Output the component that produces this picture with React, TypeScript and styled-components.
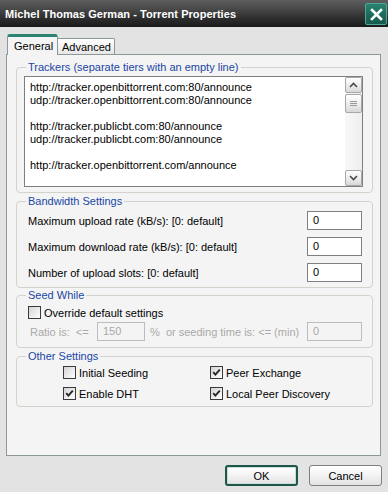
import React from "react";
import styled, { createGlobalStyle, css } from "styled-components";

const Global = createGlobalStyle`
  html, body { margin: 0; padding: 0; background: #e3e3e3; }
  body {
    font-family: "Liberation Sans", Arial, sans-serif;
    font-size: 11px;
    color: #000;
  }
  * { box-sizing: border-box; }
`;

const Window = styled.div`
  width: 388px;
  height: 492px;
  display: flex;
  flex-direction: column;
  background: #e3e3e3;
  overflow: hidden;
`;

const TitleBar = styled.div`
  height: 27px;
  flex: none;
  display: flex;
  align-items: center;
  justify-content: space-between;
  padding: 0 1px 0 5px;
  background: linear-gradient(180deg, #5e5e5e 0%, #474747 35%, #2c2c2c 70%, #1b1b1b 100%);
`;

const Title = styled.div`
  color: #fff;
  font-weight: bold;
  font-size: 11px;
  letter-spacing: 0.05px;
`;

const CloseButton = styled.div`
  width: 22px;
  height: 22px;
  margin-top: 1px;
  border: 1px solid #4fa896;
  border-radius: 2px;
  background: linear-gradient(180deg, #2a8270 0%, #1d6b5c 55%, #155a4d 100%);
  display: flex;
  align-items: center;
  justify-content: center;
`;

const Body = styled.div`
  flex: 1;
  display: flex;
  flex-direction: column;
  padding: 7px 7px 0 6px;
`;

const TabRow = styled.div`
  height: 20px;
  display: flex;
  align-items: flex-end;
  padding-left: 1px;
`;

const Tab = styled.div<{ $active?: boolean }>`
  display: flex;
  align-items: center;
  border: 1px solid #8f9898;
  border-bottom: none;
  ${(p) =>
    p.$active
      ? css`
          position: relative;
          z-index: 1;
          width: 51px;
          height: 21px;
          margin-bottom: -1px;
          padding: 0 0 1px 6px;
          border-top: 3px solid #2b8371;
          border-radius: 3px 3px 0 0;
          background: #f4f4f4;
        `
      : css`
          width: 57px;
          height: 16px;
          padding: 0 0 0 4px;
          border-left: none;
          border-radius: 0 2px 0 0;
          background: linear-gradient(180deg, #ffffff 0%, #f1f1f1 60%, #e6e6e6 100%);
        `}
`;

const Panel = styled.div`
  height: 402px;
  flex: none;
  border: 1px solid #8f9898;
  background: #f4f4f4;
  display: flex;
  flex-direction: column;
  padding: 0 7px 0 9px;
`;

const Group = styled.fieldset<{ $mt: number; $pad: string }>`
  margin: ${(p) => p.$mt}px 0 0 0;
  min-width: 0;
  border: 1px solid #d3d3cb;
  border-radius: 4px;
  padding: ${(p) => p.$pad};
`;

const Legend = styled.legend<{ $offset: number }>`
  margin-left: ${(p) => p.$offset}px;
  padding: 0 2px;
  line-height: 13px;
  height: 13px;
  color: #1b46a4;
`;

const TextBox = styled.div`
  height: 111px;
  border: 1px solid #7f7f7f;
  background: #fff;
  display: flex;
`;

const TextLines = styled.div`
  flex: 1;
  padding: 4px 0 0 5px;
  line-height: 13px;
  white-space: pre;
  overflow: hidden;
`;

const TextLine = styled.div`
  height: 13px;
`;

const ScrollBar = styled.div`
  width: 17px;
  flex: none;
  display: flex;
  flex-direction: column;
  padding: 0 0 0 0;
  background: linear-gradient(90deg, #f8f8f8 0%, #eeeeee 100%);
`;

const ScrollButton = styled.div`
  height: 16px;
  border: 1px solid #a8a8a8;
  border-radius: 2px;
  background: linear-gradient(180deg, #ffffff 0%, #ececec 55%, #d8d8d8 100%);
  display: flex;
  align-items: center;
  justify-content: center;
`;

const ScrollThumb = styled(ScrollButton)`
  height: 19px;
  margin-top: 1px;
`;

const ScrollTrack = styled.div`
  flex: 1;
`;

const RowStack = styled.div<{ $gap: number }>`
  display: flex;
  flex-direction: column;
  gap: ${(p) => p.$gap}px;
`;

const FieldRow = styled.div`
  display: flex;
  align-items: center;
  justify-content: space-between;
  height: 19px;
`;

const Label = styled.span<{ $disabled?: boolean; $width?: number; $ml?: number }>`
  white-space: pre;
  color: ${(p) => (p.$disabled ? "#a9a9a9" : "#000")};
  ${(p) => (p.$width ? `width: ${p.$width}px; flex: none;` : "")}
  ${(p) => (p.$ml ? `margin-left: ${p.$ml}px;` : "")}
`;

const NumBox = styled.div<{ $disabled?: boolean; $width: number; $push?: boolean }>`
  width: ${(p) => p.$width}px;
  height: 19px;
  flex: none;
  border: 1px solid ${(p) => (p.$disabled ? "#bdbdbd" : "#7f7f7f")};
  background: ${(p) => (p.$disabled ? "#f4f4f4" : "#fff")};
  color: ${(p) => (p.$disabled ? "#a9a9a9" : "#000")};
  padding-left: 5px;
  line-height: 17px;
  ${(p) => (p.$push ? "margin-left: auto;" : "")}
`;

const RatioRow = styled.div`
  display: flex;
  align-items: center;
  height: 19px;
  margin-top: 3px;
`;

const CheckGrid = styled.div`
  display: grid;
  grid-template-columns: 147px 147px;
  row-gap: 8px;
`;

const CheckLabel = styled.label`
  display: flex;
  align-items: center;
  gap: 3px;
  height: 13px;
  white-space: nowrap;
`;

const Box = styled.span`
  width: 13px;
  height: 13px;
  flex: none;
  border: 1px solid #3a3a3a;
  background: linear-gradient(135deg, #d2d2d2 0%, #ececec 55%, #fdfdfd 100%);
  display: flex;
  align-items: center;
  justify-content: center;
`;

const ButtonRow = styled.div`
  display: flex;
  justify-content: flex-end;
  gap: 11px;
  margin: 9px -1px 0 0;
`;

const Button = styled.div<{ $default?: boolean }>`
  width: 73px;
  height: 21px;
  display: flex;
  align-items: center;
  justify-content: center;
  border-radius: 3px;
  background: linear-gradient(180deg, #ffffff 0%, #f3f3f3 50%, #e2e2e2 100%);
  ${(p) =>
    p.$default
      ? css`
          border: 2px solid #1e5649;
          box-shadow: inset 0 0 0 1px #c8ddd8;
        `
      : css`
          border: 1px solid #7e7e7e;
        `}
`;

function CheckBox({ checked, label }: { checked?: boolean; label: string }) {
  return (
    <CheckLabel>
      <Box>
        {checked && (
          <svg width="9" height="9" viewBox="0 0 9 9">
            <polyline points="1.2,4.2 3.4,6.6 7.8,1.6" fill="none" stroke="#262626" strokeWidth="1.9" />
          </svg>
        )}
      </Box>
      {label}
    </CheckLabel>
  );
}

const trackerLines = [
  "http://tracker.openbittorrent.com:80/announce",
  "udp://tracker.openbittorrent.com:80/announce",
  "",
  "http://tracker.publicbt.com:80/announce",
  "udp://tracker.publicbt.com:80/announce",
  "",
  "http://tracker.openbittorrent.com/announce",
];

export default function App() {
  return (
    <>
      <Global />
      <Window>
        <TitleBar>
          <Title>Michel Thomas German - Torrent Properties</Title>
          <CloseButton aria-label="Close">
            <svg width="13" height="13" viewBox="0 0 13 13">
              <path d="M2 2 L11 11 M11 2 L2 11" stroke="#ffffff" strokeWidth="2.6" strokeLinecap="square" />
            </svg>
          </CloseButton>
        </TitleBar>
        <Body>
          <TabRow>
            <Tab $active>General</Tab>
            <Tab>Advanced</Tab>
          </TabRow>
          <Panel>
            <Group $mt={6} $pad="2px 9px 5px 7px">
              <Legend $offset={2}>Trackers (separate tiers with an empty line)</Legend>
              <TextBox>
                <TextLines>
                  {trackerLines.map((l, i) => (
                    <TextLine key={i}>{l}</TextLine>
                  ))}
                </TextLines>
                <ScrollBar>
                  <ScrollButton>
                    <svg width="9" height="6" viewBox="0 0 9 6">
                      <polyline points="1,5 4.5,1.5 8,5" fill="none" stroke="#4a4a4a" strokeWidth="1.6" />
                    </svg>
                  </ScrollButton>
                  <ScrollThumb>
                    <svg width="7" height="7" viewBox="0 0 7 7">
                      <path d="M0 1.5 H7 M0 3.5 H7 M0 5.5 H7" stroke="#9a9a9a" strokeWidth="1" />
                    </svg>
                  </ScrollThumb>
                  <ScrollTrack />
                  <ScrollButton>
                    <svg width="9" height="6" viewBox="0 0 9 6">
                      <polyline points="1,1 4.5,4.5 8,1" fill="none" stroke="#4a4a4a" strokeWidth="1.6" />
                    </svg>
                  </ScrollButton>
                </ScrollBar>
              </TextBox>
            </Group>

            <Group $mt={2} $pad="3px 10px 5px 11px">
              <Legend $offset={-2}>Bandwidth Settings</Legend>
              <RowStack $gap={7}>
                <FieldRow>
                  <Label>Maximum upload rate (kB/s): [0: default]</Label>
                  <NumBox $width={55}>0</NumBox>
                </FieldRow>
                <FieldRow>
                  <Label>Maximum download rate (kB/s): [0: default]</Label>
                  <NumBox $width={55}>0</NumBox>
                </FieldRow>
                <FieldRow>
                  <Label>Number of upload slots: [0: default]</Label>
                  <NumBox $width={55}>0</NumBox>
                </FieldRow>
              </RowStack>
            </Group>

            <Group $mt={1} $pad="4px 10px 6px 11px">
              <Legend $offset={-2}>Seed While</Legend>
              <CheckBox label="Override default settings" />
              <RatioRow>
                <Label $disabled $width={67} $ml={2}>{"Ratio is:  <="}</Label>
                <NumBox $disabled $width={48}>150</NumBox>
                <Label $disabled $ml={5}>{"%  or seeding time is: <= (min)"}</Label>
                <NumBox $disabled $width={55} $push>0</NumBox>
              </RatioRow>
            </Group>

            <Group $mt={2} $pad="3px 10px 6px 46px">
              <Legend $offset={-37}>Other Settings</Legend>
              <CheckGrid>
                <CheckBox label="Initial Seeding" />
                <CheckBox checked label="Peer Exchange" />
                <CheckBox checked label="Enable DHT" />
                <CheckBox checked label="Local Peer Discovery" />
              </CheckGrid>
            </Group>
          </Panel>
          <ButtonRow>
            <Button $default>OK</Button>
            <Button>Cancel</Button>
          </ButtonRow>
        </Body>
      </Window>
    </>
  );
}
